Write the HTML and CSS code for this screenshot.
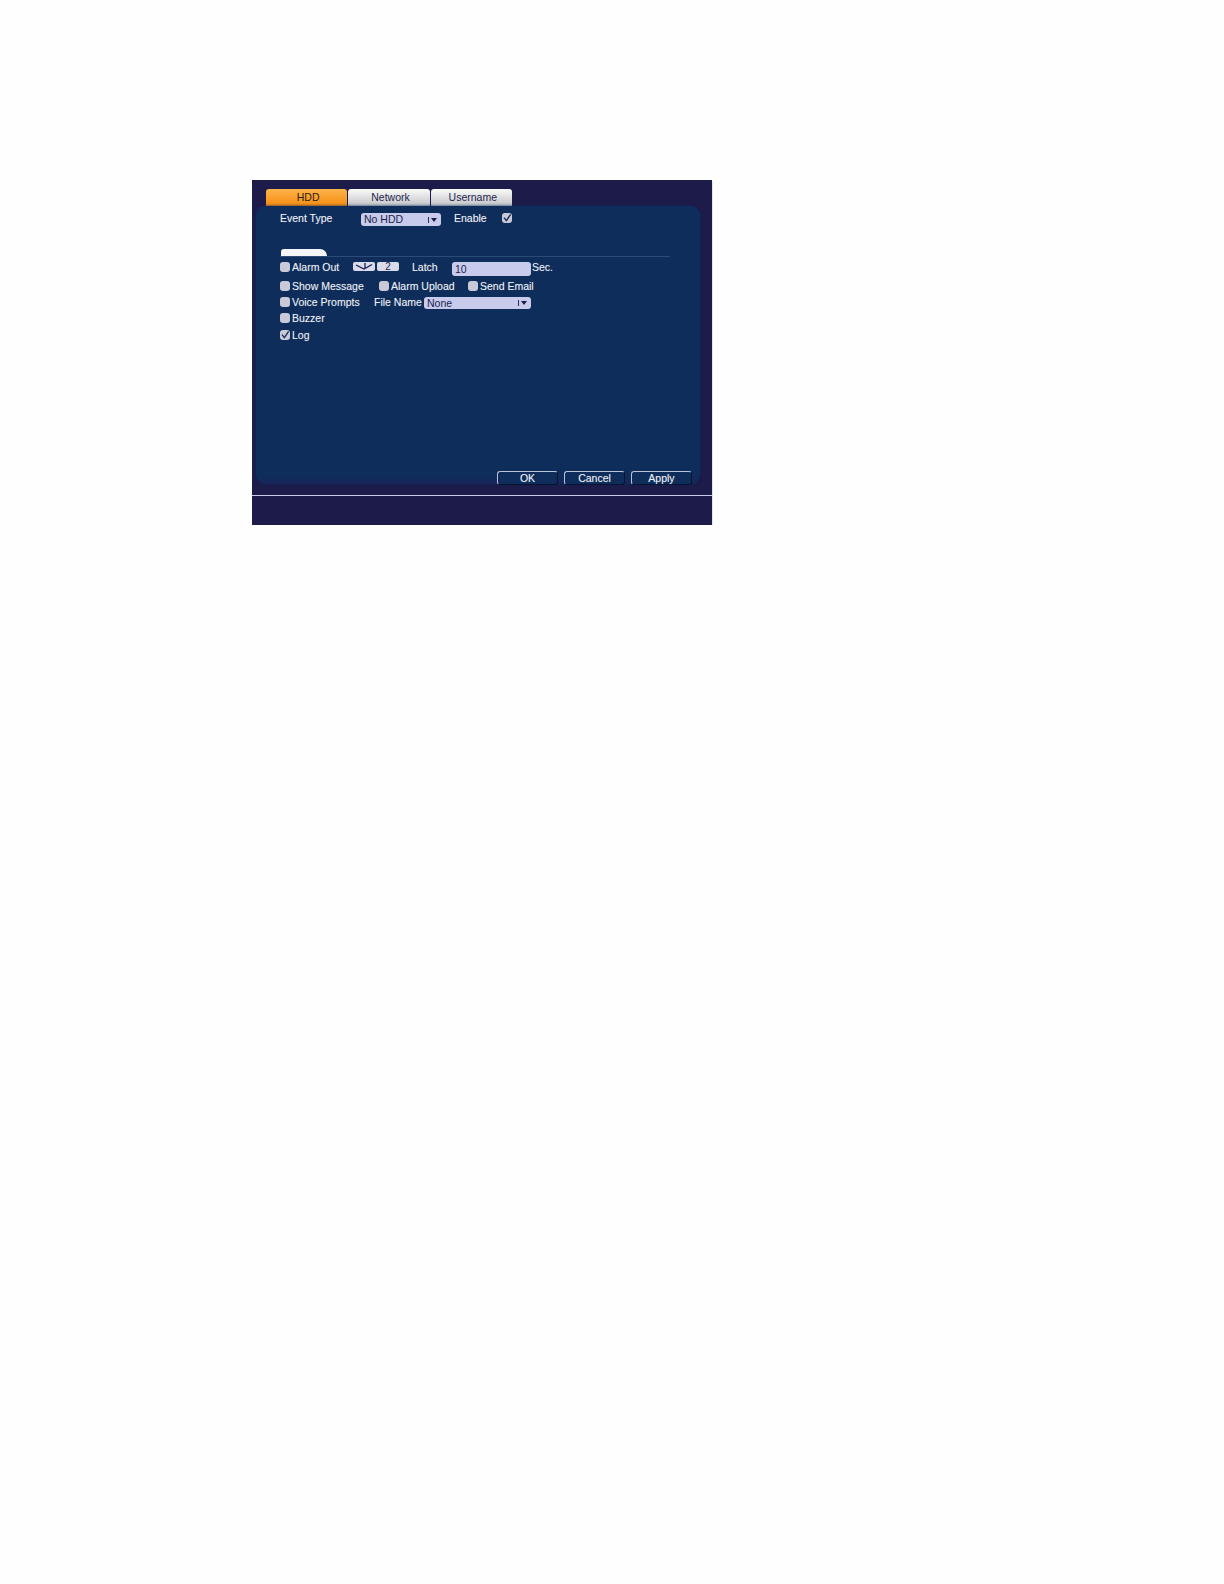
FILE: index.html
```html
<!DOCTYPE html>
<html lang="en">
<head>
    <meta charset="UTF-8">
    <title>Alarm settings</title>
    <link rel="stylesheet" href="styles.css">
</head>
<body>
    <div class="screen">
        <div class="tabs">
            <div class="tab active">HDD</div>
            <div class="tab">Network</div>
            <div class="tab">Username</div>
        </div>

        <div class="panel">
            <div class="row row-event">
                <span class="label w-event">Event Type</span>
                <div class="select select-event">No HDD<span class="arrow"><i></i></span></div>
                <span class="label w-enable">Enable</span>
                <span class="check check-enable on">
                    <svg viewBox="0 0 10 10"><path d="M2 4.6 4.4 7.6 8.6 1.4" /></svg>
                </span>
            </div>

            <div class="section"><div class="section-tab"></div></div>

            <div class="row row-alarm">
                <span class="check"></span>
                <span class="label w-alarm">Alarm Out</span>
                <span class="chip chip-icon">
                    <svg viewBox="0 0 22 9"><path d="M3 3 11 7 19 2.5M12 1V6" /></svg>
                </span>
                <span class="chip chip-num">2</span>
                <span class="label w-latch">Latch</span>
                <div class="input">10</div>
                <span class="label w-sec">Sec.</span>
            </div>

            <div class="row row-message">
                <span class="check"></span>
                <span class="label w-message">Show Message</span>
                <span class="check"></span>
                <span class="label w-upload">Alarm Upload</span>
                <span class="check"></span>
                <span class="label w-email">Send Email</span>
            </div>

            <div class="row row-voice">
                <span class="check"></span>
                <span class="label w-voice">Voice Prompts</span>
                <span class="label w-file">File Name</span>
                <div class="select select-file">None<span class="arrow"><i></i></span></div>
            </div>

            <div class="row row-buzzer">
                <span class="check"></span>
                <span class="label w-email">Buzzer</span>
            </div>

            <div class="row row-log">
                <span class="check on">
                    <svg viewBox="0 0 10 10"><path d="M2 4.6 4.4 7.6 8.6 1.4" /></svg>
                </span>
                <span class="label w-email">Log</span>
            </div>

            <div class="buttons">
                <button>OK</button>
                <button>Cancel</button>
                <button>Apply</button>
            </div>
        </div>

        <div class="status"></div>
    </div>
</body>
</html>
```

FILE: styles.css
```css
body {
    margin: 0;
    background-color: #fefefe;
    font-family: "Liberation Sans", Arial, sans-serif;
    font-size: 10.5px;
    color: #f0f2f8;
}

.screen {
    width: 460px;
    height: 345px;
    margin: 180px 0 0 252px;
    background-color: #1d1b4a;
    box-shadow: 1px 1px 0 #e4e4f2;
}

/* tabs */
.tabs {
    display: flex;
    gap: 1px;
    padding: 9px 0 0 14px;
    height: 17px;
}

.tab {
    width: 81.33px;
    height: 17px;
    box-sizing: border-box;
    padding-left: 3px;
    border-radius: 3px 3px 0 0;
    background: linear-gradient(#fafafa, #c4c4c8);
    color: #23264a;
    text-align: center;
    line-height: 17px;
}

.tab.active {
    background: linear-gradient(#fdb44a, #f58c12);
    color: #2b1c10;
}

/* main panel */
.panel {
    width: 444px;
    height: 278px;
    box-sizing: border-box;
    margin-left: 4px;
    padding: 3px 0 0 24px;
    border-radius: 10px;
    background: linear-gradient(#0e2d5a 97%, #19245a);
    box-shadow: 0 0 3px #0e2d5a;
    position: relative;
}

.row {
    display: flex;
    align-items: center;
}

.row-event { height: 18px; }
.row-alarm { height: 20px; }
.row-message { height: 18px; }
.row-voice { height: 14px; }
.row-buzzer { height: 18px; }
.row-log { height: 16px; }

.label {
    white-space: nowrap;
    text-shadow: 0 0 1px rgba(255, 255, 255, 0.25);
}

.w-event { width: 81px; }
.w-enable { width: 48px; margin-left: 13px; }
.w-alarm { width: 60px; margin-left: 2px; }
.w-latch { width: 40px; margin-left: 13px; }
.w-sec { margin-left: 1px; }
.w-message { width: 87px; margin-left: 2px; }
.w-upload { width: 77px; margin-left: 2px; }
.w-email { margin-left: 2px; }
.w-voice { width: 82px; margin-left: 2px; }
.w-file { width: 50px; }

.check {
    flex: none;
    width: 10px;
    height: 10px;
    border-radius: 3px;
    background-color: #c8cad8;
    display: block;
}

.check-enable {
    margin-bottom: 1px;
}

.check svg {
    display: block;
    width: 10px;
    height: 10px;
}

.check path {
    fill: none;
    stroke: #16285a;
    stroke-width: 1.4;
}

.select {
    position: relative;
    box-sizing: border-box;
    padding-left: 3px;
    border-radius: 3px;
    background-color: #c9cbec;
    color: #1b1e4c;
}

.select-event {
    width: 80px;
    height: 13px;
    line-height: 13px;
    margin-top: 3px;
}

.select-file {
    width: 107px;
    height: 12px;
    line-height: 12px;
    margin-top: 1px;
}

.arrow {
    position: absolute;
    right: 3px;
    top: 50%;
    margin-top: -3px;
    width: 10px;
    height: 6px;
    border-left: 1px solid #2a2c5c;
    box-sizing: border-box;
}

.arrow i {
    position: absolute;
    left: 2px;
    top: 1px;
    border-left: 3px solid transparent;
    border-right: 3px solid transparent;
    border-top: 4px solid #1b1e4c;
}

.section {
    height: 30px;
    margin-right: 30px;
    display: flex;
    align-items: flex-end;
    border-bottom: 1px solid #2c4a78;
    box-sizing: border-box;
}

.section-tab {
    width: 46px;
    height: 7px;
    margin-left: 1px;
    background-color: #f4f5f8;
    border-radius: 5px 12px 0 0;
}

.chip {
    flex: none;
    width: 22px;
    height: 9px;
    margin-bottom: 2px;
    border-radius: 2px;
    background-color: #d9dbea;
    color: #1b1e4c;
    text-align: center;
    font-size: 10px;
    line-height: 9px;
}

.chip-icon {
    margin-left: 1px;
}

.chip-num {
    margin-left: 2px;
}

.chip svg {
    display: block;
    width: 22px;
    height: 9px;
}

.chip path {
    fill: none;
    stroke: #1b1e4c;
    stroke-width: 1.3;
}

.input {
    width: 79px;
    height: 14px;
    line-height: 15px;
    margin-top: 4px;
    padding-left: 3px;
    box-sizing: border-box;
    border-radius: 3px;
    background-color: #c9cbec;
    color: #1b1e4c;
}

/* OK / Cancel / Apply */
.buttons {
    position: absolute;
    right: 8px;
    bottom: -1px;
    display: flex;
    gap: 6px;
}

button {
    width: 61px;
    height: 14px;
    padding: 0 0 1px;
    border: 1px solid #06142f;
    border-top-color: #b8c2d8;
    border-left-color: #b8c2d8;
    border-radius: 3px;
    background-color: #0e2d5a;
    color: #f0f2f8;
    font-family: inherit;
    font-size: 10.5px;
    line-height: 10px;
    text-shadow: 0 0 1px rgba(255, 255, 255, 0.25);
}

.status {
    height: 29px;
    margin-top: 11px;
    border-top: 1px solid #c8cce8;
}
```
